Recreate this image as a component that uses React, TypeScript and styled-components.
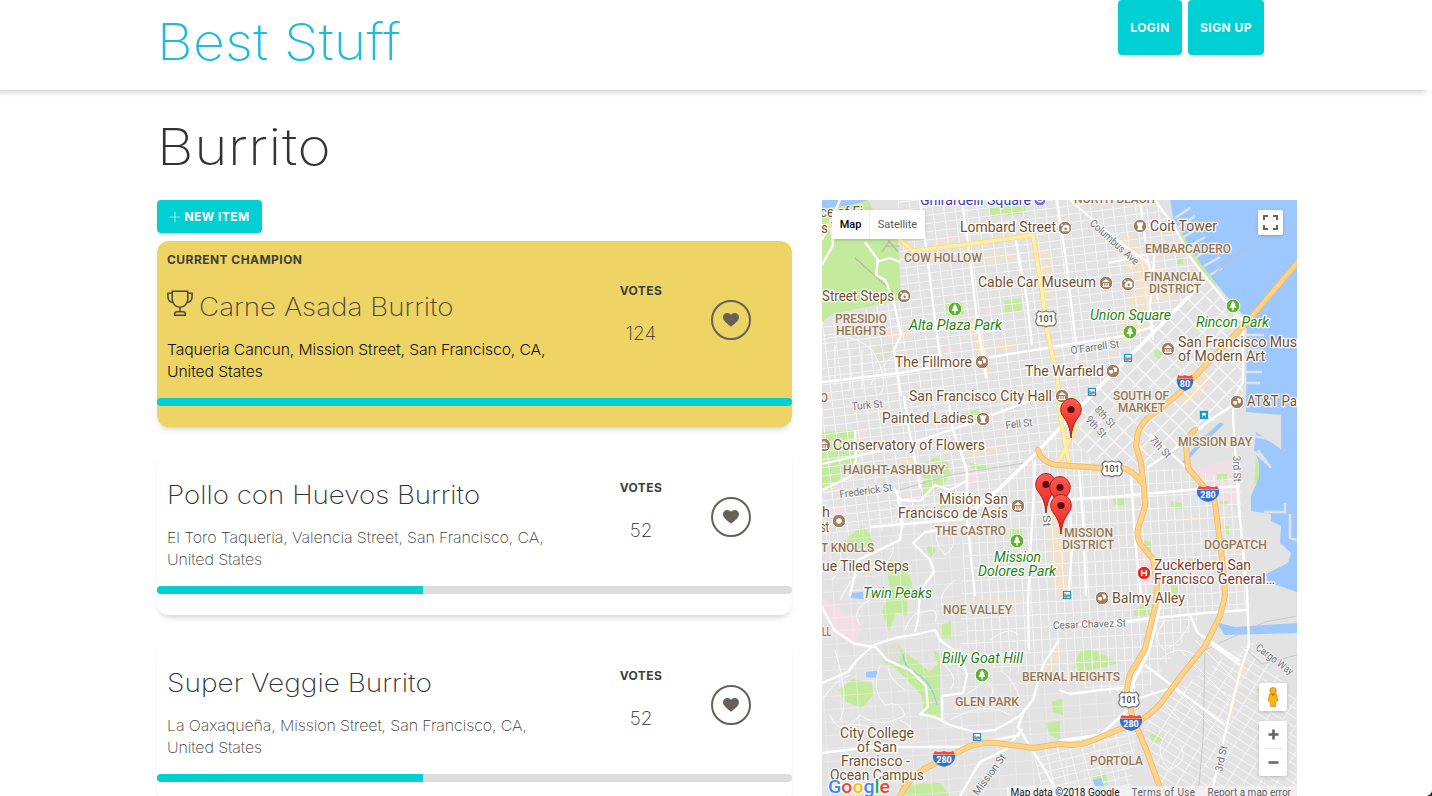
import React from "react";
import styled, { createGlobalStyle } from "styled-components";
import { TfiPlus } from "react-icons/tfi";

const Global = createGlobalStyle`
  * { box-sizing: border-box; }
  html, body { margin: 0; height: 796px; overflow: hidden; background: #fff; }
  body { font-family: Inter, "Open Sans", sans-serif; font-weight: 300; color: #333; }
  h1, h2, h3, p { margin: 0; }
`;

const cyan = "#00d0d3";

const Page = styled.div`
  position: relative;
  height: 796px;
  overflow: hidden;
`;

const Header = styled.header`
  height: 90px;
  margin-left: -10px;
  padding: 0 168px 0 167px;
  display: flex;
  justify-content: space-between;
  align-items: flex-start;
  background: #fff;
  box-shadow: 0 8px 6px -6px rgba(0, 0, 0, 0.2);
`;

const Wide = styled.span<{ $k: number }>`
  display: inline-block;
  transform: scaleX(${(p) => p.$k});
  transform-origin: 0 50%;
`;

const Logo = styled.h1`
  font-size: 50px;
  line-height: 84px;
  font-weight: 200;
  letter-spacing: 0.2px;
  color: #1cbbe0;
`;

const Nav = styled.nav`
  display: flex;
  gap: 6px;
`;

const Button = styled.button<{ $w: number; $h: number }>`
  width: ${(p) => p.$w}px;
  height: ${(p) => p.$h}px;
  display: flex;
  align-items: center;
  justify-content: center;
  gap: 3px;
  padding: 0;
  border: 0;
  border-radius: 4px;
  background: ${cyan};
  color: #fff;
  font: 700 12px Inter, sans-serif;
  letter-spacing: 0.45px;
  white-space: nowrap;
`;

const Main = styled.main`
  display: flex;
  flex-direction: column;
  padding: 0 135px 0 157px;
`;

const Heading = styled.h2`
  height: 110px;
  line-height: 115px;
  font-size: 50px;
  font-weight: 200;
  letter-spacing: 0.5px;
`;

const Columns = styled.div`
  display: flex;
  justify-content: space-between;
  align-items: flex-start;
`;

const List = styled.section`
  width: 635px;
  display: flex;
  flex-direction: column;
`;

const Card = styled.article<{ $gold?: boolean }>`
  height: ${(p) => (p.$gold ? 186 : 166)}px;
  margin-top: ${(p) => (p.$gold ? 8 : 22)}px;
  border-radius: 12px;
  background: ${(p) => (p.$gold ? "#eed365" : "#fff")};
  box-shadow: 0 5px 6px -3px rgba(0, 0, 0, 0.17), 0 3px 3px rgba(0, 0, 0, 0.02);
  display: flex;
  flex-direction: column;
`;

const CardBody = styled.div<{ $gold?: boolean }>`
  height: ${(p) => (p.$gold ? 157 : 137)}px;
  display: grid;
  grid-template-columns: 422px 104px 1fr;
  padding-left: 10px;
`;

const Info = styled.div<{ $gold?: boolean }>`
  padding-top: ${(p) => (p.$gold ? 11 : 25)}px;
  color: ${(p) => (p.$gold ? "#4c4738" : "#333")};
`;

const Small = styled.div`
  font-size: 12px;
  line-height: 16px;
  font-weight: 700;
  letter-spacing: 0.45px;
  color: #403f3b;
`;

const Title = styled.h3<{ $gold?: boolean }>`
  display: flex;
  align-items: center;
  gap: 6px;
  height: 40px;
  margin-top: ${(p) => (p.$gold ? 18 : 0)}px;
  font-size: 25.5px;
  font-weight: 200;
  white-space: nowrap;
  svg { margin-top: -7px; }
`;

const Address = styled.p<{ $gold?: boolean }>`
  width: 370px;
  padding-top: 13px;
  font-size: 15px;
  line-height: 22px;
  font-weight: ${(p) => (p.$gold ? 300 : 200)};
  letter-spacing: -0.1px;
  color: ${(p) => (p.$gold ? "#161408" : "#3a3a3a")};
  transform: scaleX(${(p) => (p.$gold ? 1.047 : 1.066)});
  transform-origin: 0 50%;
`;

const Votes = styled.div<{ $gold?: boolean }>`
  padding-top: ${(p) => (p.$gold ? 42 : 31)}px;
  text-align: center;
`;

const Count = styled.div`
  margin-top: 23px;
  font-size: 19px;
  line-height: 24px;
  font-weight: 200;
`;

const HeartCell = styled.div<{ $gold?: boolean }>`
  padding: ${(p) => (p.$gold ? 59 : 48)}px 0 0 18px;
`;

const HeartButton = styled.button`
  width: 40px;
  height: 40px;
  padding: 0;
  border: 2px solid #656059;
  border-radius: 50%;
  background: transparent;
  display: flex;
  align-items: center;
  justify-content: center;
`;

const Track = styled.div`
  height: 8px;
  border-radius: 4px;
  overflow: hidden;
  background: #ddd;
`;

const Fill = styled.div`
  height: 8px;
  background: ${cyan};
`;

const MapPanel = styled.aside`
  position: relative;
  width: 475px;
  height: 596px;
  overflow: hidden;
  background: #e5e3df;
  font-family: Roboto, sans-serif;
  font-weight: 400;
`;

const MapArt = styled.svg`
  display: block;
  font-family: Roboto, sans-serif;
`;

const MapControl = styled.div<{ $x: number; $y: number; $w: number; $h: number }>`
  position: absolute;
  left: ${(p) => p.$x}px;
  top: ${(p) => p.$y}px;
  width: ${(p) => p.$w}px;
  height: ${(p) => p.$h}px;
  display: flex;
  align-items: center;
  justify-content: center;
  background: #fff;
  border-radius: 2px;
  box-shadow: 0 1px 4px -1px rgba(0, 0, 0, 0.3);
`;

const TypeOption = styled.span<{ $active?: boolean }>`
  flex: ${(p) => (p.$active ? "0 0 38px" : "1")};
  line-height: 29px;
  text-align: center;
  font-size: 11px;
  font-weight: ${(p) => (p.$active ? 500 : 400)};
  color: ${(p) => (p.$active ? "#000" : "#565656")};
  border-right: ${(p) => (p.$active ? "1px solid #eee" : "0")};
`;

const Attribution = styled.div`
  position: absolute;
  right: 0;
  bottom: 0;
  height: 10px;
  padding: 0 6px 0 4px;
  display: flex;
  gap: 12px;
  background: rgba(245, 245, 245, 0.72);
  font-size: 10px;
  line-height: 14px;
  color: #666;
  white-space: nowrap;
  overflow: hidden;
  b { font-weight: 400; color: #222; }
  b + span { letter-spacing: 0.4px; }
`;

const WindowCorner = styled.svg`
  position: absolute;
  right: 0;
  bottom: 0;
`;

const items = [
  { name: "Carne Asada Burrito", place: "Taqueria Cancun, Mission Street, San Francisco, CA, United States", votes: 124, gold: true, stretch: 1.09 },
  { name: "Pollo con Huevos Burrito", place: "El Toro Taqueria, Valencia Street, San Francisco, CA, United States", votes: 52, stretch: 1.087 },
  { name: "Super Veggie Burrito", place: "La Oaxaqueña, Mission Street, San Francisco, CA, United States", votes: 52, stretch: 1.1 },
];

const Heart = () => (
  <svg width="16" height="14" viewBox="0 0 16 14">
    <path d="M8 13.8C3 10 0 7.300 0 4.300 0 1.800 1.900 0 4.300 0 5.800 0 7.200.700 8 1.900 8.800.700 10.200 0 11.700 0 14.100 0 16 1.800 16 4.300 16 7.300 13 10 8 13.800Z" fill="#656059" />
  </svg>
);

const Trophy = () => (
  <svg width="26" height="26" viewBox="0 0 26 26" fill="none" stroke="#4c4738" strokeWidth="1.500">
    <path d="M5.200 1.200H20.800V8.500C20.800 13.600 17.600 17.300 13 17.300S5.200 13.600 5.200 8.500Z" />
    <path d="M5.200 3.300H.9V6.300C.9 10 3 12.300 6.300 12.500M20.800 3.300H25.100V6.300C25.100 10 23 12.300 19.700 12.500" />
    <path d="M13 17.300V21.800M7.700 25.200V23.900Q7.700 21.800 10 21.800H16Q18.300 21.800 18.300 23.900V25.200Z" />
  </svg>
);

/* ---- Map data ---- */

const gridLines = (x0: number, y0: number, x1: number, y1: number, dx: number, dy: number) => {
  let d = "";
  for (let x = x0; x <= x1; x += dx) d += `M${x} ${y0}V${y1}`;
  for (let y = y0; y <= y1; y += dy) d += `M${x0} ${y}H${x1}`;
  return d;
};

const water =
  "M1170 198L1173 218 1195 255 1210 276 1228 298 1243 315 1247 331 1246 412 1281 415 1281 449 1256 432 1254 450 1259 463 1259 478 1251 496 1251 511 1271 514 1271 521 1281 526 1280 543 1291 553 1288 563 1266 574 1268 582 1297 592V198Z";

const greens = [
  "M822 206L850 204 868 200 880 222 898 240 901 300 832 314 822 322Z",
  "M989 200H1028L1024 214 990 217Z",
  "M945 303L962 301 964 314 946 316Z",
  "M1004 301L1021 298 1022 311 1005 313Z",
  "M822 432L855 430 859 446 854 464 832 488 822 490Z",
  "M922 464L935 458 948 462 950 474 944 485 921 496 923 482Z",
  "M970 463L989 466V470L970 468Z",
  "M961 414L978 409 983 421 966 424Z",
  "M844 541L855 532 862 525 870 535 874 548 857 549Z",
  "M886 560L903 561 912 583 907 596 907 616 896 612 889 632 882 611 890 592Z",
  "M897 642L904 652 917 661 929 672 938 664 933 650 940 654V700L941 718 925 715 921 695 908 681 897 669 883 662Z",
  "M838 690L853 679 872 683 873 695 862 708 846 702Z",
  "M942 624L951 621V639L942 638Z",
  "M1073 668L1082 648 1098 652 1119 663 1101 668 1080 671Z",
  "M1052 702L1063 698V715L1053 712ZM1045 723L1060 721V740L1050 735Z",
  "M901 785L940 783 950 796H900Z",
  "M1178 236L1187 230 1205 270 1217 286 1211 285 1198 266Z",
  "M1177 257L1183 258V264H1177Z",
  "M1143 540L1151 542 1152 552 1143 549ZM1171 501L1182 503V509L1171 508Z",
  "M1217 474H1227V481H1217ZM1220 501H1228V506H1220ZM1224 526H1229V534H1224Z",
  "M1150 735L1158 732 1163 741 1152 743ZM1188 559H1196V567H1188Z",
  "M1256 458L1261 469 1260 481 1254 485Z",
  "M1113 498H1126V505H1113ZM1010 528H1022V547H1010Z",
  "M1092 776L1106 773 1108 788 1096 791ZM1155 350L1163 350 1160 359 1154 356Z",
  "M928 545L936 549 932 557 927 551ZM938 500L955 490 960 502 941 509Z",
  "M1133 610L1148 600 1150 615 1135 616ZM1170 584L1178 586 1177 596 1171 592ZM1256 690L1262 686 1262 693Z",
];

const beiges = [
  "M933 242L958 234V238L935 246ZM963 258L1013 252V258L965 266Z",
  "M1121 231L1131 235 1150 266 1175 272 1190 283 1175 296 1150 304 1145 330 1125 345 1120 330 1135 285 1123 259Z",
  "M880 330L908 332V337L882 338ZM975 305L985 340 992 375H982L971 330Z",
  "M993 343L1012 340 1012 350 995 352Z",
  "M1042 250L1050 252 1054 292 1046 295Z",
  "M892 463L920 457V462L895 468ZM960 452L1005 445V450L962 457Z",
  "M1045 505L1058 500 1065 560 1067 595H1055Z",
  "M1190 370L1213 375 1202 395 1180 405Z",
  "M1060 637L1050 660 1045 672 1050 675 1060 655Z",
  "M1144 442L1149 444 1144 462 1137 456Z",
  "M1240 660L1245 668 1230 720 1224 735Z",
  "M1190 276L1215 256 1219 259 1196 281Z",
  "M1184 517H1200V521H1184ZM970 598L1020 598V602H970Z",
];

const pinks = [
  "M822 598L864 622 856 642 825 632Z",
  "M1198 466L1235 461 1237 506 1216 505 1205 487 1200 478Z",
  "M857 430L865 427 867 440 858 442ZM967 470L979 472V482L967 481Z",
  "M1136 540L1146 550 1152 570 1150 585 1140 590Z",
  "M985 307L993 306V315L986 316ZM828 506L846 505 848 515 832 520Z",
  "M947 345L952 347V359L945 352Z",
];

const streets = [
  "M1155 200L1175 228 1191 258 1205 276 1231 308 1243 322V381L1234 398 1233 416 1235 450 1239 510 1247 590",
  "M1247 590L1249 645 1240 672 1228 721 1220 757 1211 796",
  "M963 519L1000 488 1033 456 1059 429 1107 379 1155 331 1205 280",
  "M822 382L900 373 1057 346 1125 336 1155 326",
  "M1037 398L960 427 905 445 870 453 822 464",
  "M1070 200L1100 226 1130 250 1148 262",
  "M1109 263L1148 254 1190 250",
  "M920 200L928 262 935 320 942 370",
  "M962 200L970 258 977 320 986 378",
  "M1015 236L1027 300 1032 345",
  "M1057 200L1066 260 1078 360",
  "M1041 501L1110 497 1200 489 1240 486",
  "M1035 460L1033 505 1030 560 1028 600 1029 650",
  "M1079 470L1083 520 1086 596",
  "M1131 475L1135 540 1141 596",
  "M1069 480L1072 550 1068 600",
  "M948 398L953 430 967 470 967 520 975 596",
  "M904 396L909 430 918 475 920 488",
  "M894 488L900 500 920 501 935 485 950 490 966 481",
  "M870 527L917 523 963 519",
  "M970 525L925 532 913 543 930 560 934 572 920 591 918 620 915 632",
  "M822 683L848 672 857 660 874 645 895 638 918 634 935 630 940 640 960 655 967 675 963 693 942 696 942 720",
  "M874 645L887 660 910 670 926 686 928 707 920 714 935 717 950 725 975 732 995 730 1020 716 1033 700 1043 665 1059 640",
  "M822 607L834 630 855 644 875 647",
  "M822 753L870 747 920 747 960 747 1020 735",
  "M1059 622L1095 626 1144 619 1205 613 1247 610",
  "M1145 665L1174 687 1205 710 1225 725",
  "M1140 698L1174 687M1190 615L1198 633 1240 661M1211 644L1240 665",
  "M1059 795L1045 770 1018 727 1024 710",
  "M1022 729L1005 750 980 762 960 796",
  "M1147 468L1180 445 1210 420 1233 405",
  "M1150 434L1187 468 1205 488",
  "M1059 690L1070 694 1100 690 1135 687",
  "M822 490L850 477 856 460 855 430",
  "M830 220L833 245 822 265M865 242L878 260 876 275 885 280 893 298 901 335",
  "M901 335L894 350 901 396",
  "M822 240L840 200M876 262L890 258 900 262",
  "M1155 250L1150 305 1153 340M1140 200L1148 262 1158 300",
  "M850 596L858 560 900 540 902 525 897 490",
];

const highways = [
  "M1297 263L1248 321 1201 370 1176 396 1148 418Q1138 427 1137 438L1136 446 1141 463 1144 489 1145 506 1138 529Q1136 538 1142 546L1153 559 1157 583 1156 603 1145 649 1130 674Q1127 684 1127 696L1133 719 1146 749 1163 796",
  "M1038 450Q1042 464 1059 465L1101 468 1123 468Q1135 472 1143 484",
  "M1195 430Q1186 438 1186 445L1188 468 1205 488Q1214 496 1215 503L1220 543 1224 575 1225 596 1220 616 1205 646 1181 676 1161 703Q1150 716 1135 723L1091 741Q1082 745 1071 745L1059 744 1033 748 997 743Q985 742 970 746L930 766Q910 775 900 796",
];

const lombard = "M822 226L850 222 898 238 913 251 963 245 1033 235 1042 291 1047 331 1057 375 1061 420 1070 470M1077 425L1059 461";

const hills = [
  "M832 535Q850 560 832 580M840 600Q860 560 880 570 900 550 890 540M870 600Q850 610 860 625",
  "M835 650Q850 700 840 720M880 665Q870 690 885 705 900 700 905 715 880 730 860 715 840 740 830 715",
  "M900 720Q920 730 905 738M850 725Q870 722 885 738M822 700Q835 680 850 675M905 690Q890 680 888 668",
  "M945 665Q960 680 950 690M955 710Q965 695 985 705 1000 690 985 680 975 690 965 695M950 720Q985 700 1010 715",
  "M905 630Q912 610 925 612 940 606 935 622M940 520Q930 540 945 555 960 545 950 530M955 580Q930 600 950 615",
  "M990 640Q1010 625 1018 635M1000 670Q1015 680 1020 700M975 650Q990 660 1000 655M895 505Q905 515 895 522",
  "M822 340Q850 330 872 350 890 380 880 395M850 350V390M862 350V390M870 385Q885 360 895 355M835 345V385",
  "M1165 620Q1150 640 1165 650 1185 640 1190 620M1160 660Q1180 640 1200 660M1170 730Q1150 750 1170 770 1190 760 1180 745",
  "M1195 640L1235 680M1180 650L1230 700M1175 690L1220 735M1150 690L1180 720",
];

type Label = [text: string, x: number, y: number, width: number];

const pois: Label[] = [
  ["Lombard Street", 960, 232, 96], ["Cable Car Museum", 978, 287, 118], ["Coit Tower", 1150, 231, 67],
  ["Street Steps", 822, 301, 72], ["The Fillmore", 895, 367, 77], ["The Warfield", 1025, 376, 79],
  ["San Francisco City Hall", 909, 401, 143], ["San Francisco Mus", 1178, 347, 119], ["of Modern Art", 1178, 361, 87],
  ["Painted Ladies", 882, 423, 92], ["AT&T Pa", 1247, 406, 50], ["Conservatory of Flowers", 833, 450, 152],
  ["Misión San", 939, 504, 69], ["Francisco de Asís", 898, 518, 110], ["ue Tiled Steps", 822, 571, 87],
  ["h", 822, 517, 8], ["st", 820, 532, 9], ["Balmy Alley", 1112, 603, 73],
  ["City College", 840, 738, 74], ["of San", 857, 752, 40], ["Francisco -", 841, 766, 69], ["Ocean Campus", 830, 780, 94],
  ["ce of Fi", 820, 217, 43], ["s T", 821, 233, 18],
];

const districts: Label[] = [
  ["NORTH BEACH", 1074, 203, 81], ["COW HOLLOW", 904, 262, 78], ["EMBARCADERO", 1145, 253, 86],
  ["FINANCIAL", 1144, 281, 61], ["DISTRICT", 1149, 293, 52], ["PRESIDIO", 835, 323, 52], ["HEIGHTS", 836, 335, 50],
  ["SOUTH OF", 1113, 400, 56], ["MARKET", 1118, 412, 47], ["MISSION BAY", 1178, 446, 74],
  ["HAIGHT-ASHBURY", 843, 474, 102], ["THE CASTRO", 935, 535, 71], ["MISSION", 1064, 537, 49], ["DISTRICT", 1062, 549, 52],
  ["DOGPATCH", 1204, 549, 63], ["T KNOLLS", 821, 552, 53], ["NOE VALLEY", 943, 614, 69], ["GLEN PARK", 955, 706, 64],
  ["BERNAL HEIGHTS", 1022, 681, 98], ["PORTOLA", 1090, 765, 53], ["LL", 822, 636, 9], ["O", 820, 402, 8],
];

const parks: Label[] = [
  ["Alta Plaza Park", 909, 330, 93], ["Union Square", 1090, 320, 81], ["Rincon Park", 1196, 327, 73],
  ["Mission", 994, 562, 47], ["Dolores Park", 978, 576, 78], ["Twin Peaks", 863, 598, 69], ["Billy Goat Hill", 942, 663, 81],
];

const roads: [string, number, number, number, number][] = [
  ["Columbus Ave", 1089, 224, 62, 42], ["O'Farrell St", 1071, 354, 49, -8], ["Turk St", 852, 410, 31, -5],
  ["Fell St", 1006, 429, 27, -7], ["Frederick St", 840, 498, 53, -8], ["8th St", 1094, 410, 25, 47],
  ["9th St", 1085, 420, 25, 47], ["7th St", 1149, 440, 26, 47], ["3rd St", 1233, 456, 26, 88],
  ["Cesar Chavez St", 1053, 629, 73, -2], ["Cargo Way", 1255, 649, 44, 37], ["3rd St", 1222, 772, 26, -78],
  ["Mission St", 978, 796, 48, -54], ["St", 1043, 515, 12, 88],
];

const badges: [number, number][] = [
  [1065, 228], [1140, 226], [1106, 283], [1128, 284], [904, 296], [982, 362], [1113, 371], [1168, 349], [1062, 396],
  [983, 419], [1237, 402], [824, 445], [1018, 506], [839, 521], [1102, 598],
];

const trees: [number, number][] = [[955, 309], [1130, 332], [1233, 306], [1017, 541], [982, 675]];
const stations: [number, number][] = [[1128, 358], [1092, 392], [1204, 415], [1067, 595], [977, 737]];
const usShields: [number, number][] = [[1046, 319], [1112, 469], [1129, 700]];
const interstates: [number, number, string][] = [[1185, 383, "80"], [1208, 494, "280"], [1131, 723, "280"], [944, 759, "280"]];
const pins: [number, number][] = [[1071, 438], [1046, 513], [1060, 516], [1061, 534]];

const Labels = ({ data, ...rest }: { data: Label[] } & React.SVGProps<SVGGElement>) => (
  <g paintOrder="stroke" strokeLinejoin="round" {...rest}>
    {data.map(([t, x, y, w], i) => (
      <text key={i} x={x} y={y} textLength={w} lengthAdjust="spacingAndGlyphs">{t}</text>
    ))}
  </g>
);

const CityMap = () => (
  <MapArt width="475" height="596" viewBox="822 200 475 596">
    <defs>
      <clipPath id="north"><path d="M898 200H1155L1205 278 1057 428 963 519 822 540V322L901 300Z" /></clipPath>
      <clipPath id="soma"><path d="M1205 278L1243 322V400L1147 470 1100 464 1060 430Z" /></clipPath>
      <clipPath id="south"><path d="M963 519L1059 429 1100 466 1147 468 1190 470 1240 480 1250 610H1205L1140 700 960 660Z" /></clipPath>
      <clipPath id="west"><path d="M822 500L960 520 963 660 1140 700 1130 796H822Z" /></clipPath>
      <clipPath id="east"><path d="M1140 715L1250 640 1297 700V796H1160Z" /></clipPath>
      <linearGradient id="pin" x1="0" y1="0" x2="0" y2="1">
        <stop offset="0" stopColor="#ff5a52" /><stop offset="1" stopColor="#e3211b" />
      </linearGradient>
    </defs>
    <path d="M822 200H1297V796H822Z" fill="#e3e3e3" />
    {pinks.map((d, i) => <path key={i} d={d} fill="#f1dfe5" />)}
    {beiges.map((d, i) => <path key={i} d={d} fill="#f3e2cb" />)}
    {greens.map((d, i) => <path key={i} d={d} fill="#c3ea9d" />)}
    <path d="M883 645L898 643 902 655 898 665 882 660ZM875 347L895 343 890 357 878 362Z" fill="#dedfd5" />
    <g stroke="#f5f5f5" strokeWidth="0.9" fill="none">
      <g clipPath="url(#north)"><path transform="rotate(-7 1000 350)" d={gridLines(760, 150, 1250, 580, 11.200, 8.200)} /></g>
      <g clipPath="url(#soma)"><path transform="rotate(44 1150 390)" strokeWidth="1.600" d={gridLines(1040, 270, 1260, 500, 12, 14)} /></g>
      <g clipPath="url(#south)"><path transform="rotate(-3 1080 540)" d={gridLines(930, 400, 1270, 720, 8.200, 12.500)} /></g>
      <g clipPath="url(#west)" opacity="0.5"><path transform="rotate(-4 950 700)" d={gridLines(790, 480, 1170, 830, 17, 13)} /></g>
      <g clipPath="url(#east)"><path transform="rotate(32 1220 730)" d={gridLines(1100, 600, 1340, 860, 14, 8)} /></g>
      <g clipPath="url(#west)"><path transform="rotate(-14 1100 770)" d={gridLines(1040, 735, 1150, 830, 12, 8)} /></g>
    </g>
    <path d={water} fill="#9dc8ff" />
    <path d="M822 200H868L850 206 835 206 822 212ZM1216 622L1235 627 1297 623V633L1225 635ZM1093 780L1101 778 1107 792 1098 796ZM850 593L863 592V599L851 598ZM866 672L877 671V678L866 677Z" fill="#9dc8ff" />
    <path d="M1220 422L1200 441 1182 462 1184 464 1204 443 1224 424Z" fill="#9dc8ff" />
    <path d="M1175 218L1190 208M1177 228L1195 216M1182 238L1202 226M1188 247L1205 237M1195 258L1213 245M1204 266L1220 257M1210 275L1222 268M1245 335H1264M1246 350H1262M1246 360L1264 358M1246 372H1262M1246 383H1260M1250 435L1281 442M1250 425H1280M1255 452L1270 466M1258 450L1271 468M1264 512H1285V503M1290 514V538L1297 540" stroke="#dfe3e8" strokeWidth="2.500" fill="none" />
    <path d="M1212 278Q1240 242 1297 226" stroke="#b9c0c8" strokeWidth="1.200" fill="none" />
    <path d="M855 258L893 292M870 272L860 262M890 240L882 252M888 240L898 252M885 246H900" stroke="#b9b9a0" strokeWidth="1.200" fill="none" />
    <path d="M900 490L950 475 1030 462M1205 653L1203 740 1198 796M1297 655L1262 664 1245 648M1297 616L1265 622 1205 650" stroke="#c8c8c8" strokeWidth="1" fill="none" />
    <path d="M903 654Q904 668 917 674 932 682 937 705" stroke="#9cc5f5" strokeWidth="1.200" fill="none" />
    <g stroke="#fafafa" strokeWidth="1" fill="none">{hills.map((d, i) => <path key={i} d={d} />)}</g>
    <g stroke="#fff" strokeWidth="2.300" fill="none" strokeLinejoin="round">{streets.map((d, i) => <path key={i} d={d} />)}</g>
    <path d={streets[2]} stroke="#fff" strokeWidth="3.500" fill="none" />
    <path d="M1161 600Q1157 620 1149 650 1142 665 1132 685L1128 710 1100 735 1059 741M1133 725L1152 760 1160 796" stroke="#fff" strokeWidth="3" fill="none" />
    <g fill="none" strokeLinejoin="round">
      <path d={lombard} stroke="#f4dc83" strokeWidth="5" />
      <path d={lombard} stroke="#ffeeaa" strokeWidth="3.500" />
      {highways.map((d, i) => <path key={i} d={d} stroke="#f0bc68" strokeWidth="6" strokeLinecap="round" />)}
      {highways.map((d, i) => <path key={i} d={d} stroke="#ffd28a" strokeWidth="4.200" strokeLinecap="round" />)}
    </g>
    <g fontSize="10.500" fill="#777" stroke="#f5f5f5" strokeWidth="2" paintOrder="stroke">
      {roads.map(([t, x, y, w, r], i) => (
        <text key={i} x={x} y={y} textLength={w} lengthAdjust="spacingAndGlyphs" transform={`rotate(${r} ${x} ${y})`}>{t}</text>
      ))}
    </g>
    <Labels data={districts} fontSize="12" fontWeight="500" fill="#967755" stroke="#f3f1ee" strokeWidth="2.500" />
    <Labels data={pois} fontSize="14" fill="#75502f" stroke="#fff" strokeWidth="2.500" />
    <Labels data={[["Zuckerberg San", 1154, 570, 97], ["Francisco General…", 1154, 584, 121]]} fontSize="14" fill="#84392f" stroke="#fff" strokeWidth="2.500" />
    <Labels data={[["Ghirardelli Square", 920, 205, 111]]} fontSize="14" fill="#4139bd" stroke="#fff" strokeWidth="2.500" />
    <Labels data={parks} fontSize="14" fontStyle="italic" fill="#278312" stroke="#fff" strokeWidth="2.500" />
    <circle cx="1040" cy="200" r="6" fill="#766be0" stroke="#fff" />
    <path d="M1037 200Q1040 204 1043 200" stroke="#fff" strokeWidth="1.300" fill="none" />
    {badges.map(([x, y], i) => (
      <g key={i} transform={`translate(${x} ${y})`}>
        <circle r="6.700" fill="#a47c5f" stroke="#fff" strokeWidth="1" />
        {i === 13 ? <circle r="2.800" fill="#fff" />
          : [2, 7, 8, 11, 12].includes(i) ? <path d="M-4 -1L0 -4 4 -1ZM-3 0H-1.700V3H-3ZM-.6 0H.6V3H-.6ZM1.700 0H3V3H1.700ZM-4 3H4V4H-4Z" fill="#fff" />
          : [1, 9].includes(i) ? <path d="M-3 -4H-1.500V-3H-.7V-4H.7V-3H1.500V-4H3V-1L2 0V2L3 4H-3L-2 2V0L-3 -1Z" fill="#fff" />
          : [5, 6, 10, 14].includes(i) ? <path d="M-4 -1H0V2Q-2 4 -4 1ZM.5 -4L4 -3V0Q3 2 1 1V-2H0Z" fill="#fff" />
          : <><path d="M-2 -2H-1L0 -3H2L3 -2H4V3H-3V0H-2ZM-4 -3H-2M-3 -4V-2" fill="#fff" stroke="#fff" strokeWidth=".7" /><circle cx=".7" cy=".7" r="1.300" fill="#a47c5f" /></>}
      </g>
    ))}
    {trees.map(([x, y], i) => (
      <g key={i} transform={`translate(${x} ${y})`}>
        <circle r="6.900" fill="#5db52f" stroke="#fff" strokeWidth="1" />
        <path d="M0 -5L2.500 -1.500H1.700L3.500 2H.7V4.500H-.7V2H-3.500L-1.700 -1.500H-2.500Z" fill="#fff" />
      </g>
    ))}
    {stations.map(([x, y], i) => (
      <g key={i} transform={`translate(${x} ${y})`}>
        <rect x="-3.500" y="-3.500" width="7" height="7" fill="#fff" stroke="#1598d0" strokeWidth="1.200" />
        {i === 2 ? <path d="M-4 -4H4V4H-4ZM-2 -2V.5H2V-2ZM-2 1.500V2.500H-1V1.500ZM1 1.500V2.500H2V1.500Z" fill="#1598d0" fillRule="evenodd" /> : <path d="M-2 -1.500V2H0V0H2V2" fill="none" stroke="#666" strokeWidth="1.200" />}
      </g>
    ))}
    <g transform="translate(1144 573)">
      <circle r="6.700" fill="#e8291d" stroke="#fff" /><path d="M-2.300 -3V3M2.300 -3V3M-2 0H2" stroke="#fff" strokeWidth="1.500" />
    </g>
    {usShields.map(([x, y], i) => (
      <g key={i} transform={`translate(${x} ${y})`}>
        <path d="M-7 -8Q-4 -6 0 -8 4 -6 7 -8L10 -5Q8 -2 10 1 11 5 7 7 3 6 0 8 -3 6 -7 7 -11 5 -10 1 -8 -2 -10 -5Z" fill="#fff" stroke="#777" strokeWidth="1.200" />
        <text y="3.300" textAnchor="middle" fontSize="9" fontWeight="500" fill="#444">101</text>
      </g>
    ))}
    {interstates.map(([x, y, t], i) => (
      <g key={i} transform={`translate(${x} ${y}) scale(${t === "80" ? 0.75 : 1} 1)`}>
        <path d="M-11 -4H11Q12 5 0 8 -12 5 -11 -4Z" fill="#3471cd" />
        <path d="M-9 -8Q-5 -6 0 -8 5 -6 9 -8L11 -4.600H-11Z" fill="#e3504c" />
        <text y="4" textAnchor="middle" fontSize="9" fontWeight="700" fill="#fff" transform={t === "80" ? "scale(1.333 1)" : undefined}>{t}</text>
      </g>
    ))}
    {pins.map(([x, y], i) => (
      <g key={i} transform={`translate(${x} ${y})`}>
        <path d="M0 0C-1 -10 -3 -15 -7.500 -21 -14 -29 -8 -39.500 0 -39.500 8 -39.500 14 -29 7.500 -21 3 -15 1 -10 0 0Z" fill="url(#pin)" stroke="#a3231b" strokeWidth="1" />
        <circle cy="-28.500" r="3.600" fill="#5a0b0b" />
      </g>
    ))}
    <g fontSize="19" fontWeight="500" stroke="#fff" strokeWidth="2" paintOrder="stroke" fontFamily="Roboto, sans-serif">
      <text x="828" y="793" textLength="62" lengthAdjust="spacingAndGlyphs">
        <tspan fill="#4285f4">G</tspan><tspan fill="#ea4335">o</tspan><tspan fill="#fbbc05">o</tspan><tspan fill="#4285f4">g</tspan><tspan fill="#34a853">l</tspan><tspan fill="#ea4335">e</tspan>
      </text>
    </g>
  </MapArt>
);

export default function App() {
  return (
    <Page>
      <Global />
      <Header>
        <Logo><Wide $k={1.107}>Best Stuff</Wide></Logo>
        <Nav>
          <Button $w={64} $h={55}>LOGIN</Button>
          <Button $w={76} $h={55}>SIGN UP</Button>
        </Nav>
      </Header>
      <Main>
        <Heading><Wide $k={1.135}>Burrito</Wide></Heading>
        <Columns>
          <List>
            <Button $w={105} $h={33}><TfiPlus size={12} />NEW ITEM</Button>
            {items.map((it) => (
              <Card key={it.name} $gold={it.gold}>
                <CardBody $gold={it.gold}>
                  <Info $gold={it.gold}>
                    {it.gold && <Small>CURRENT CHAMPION</Small>}
                    <Title $gold={it.gold}>{it.gold && <Trophy />}<Wide $k={it.stretch}>{it.name}</Wide></Title>
                    <Address $gold={it.gold}>{it.place}</Address>
                  </Info>
                  <Votes $gold={it.gold}>
                    <Small>VOTES</Small>
                    <Count>{it.votes}</Count>
                  </Votes>
                  <HeartCell $gold={it.gold}><HeartButton><Heart /></HeartButton></HeartCell>
                </CardBody>
                <Track><Fill style={{ width: `${Math.round((it.votes / 124) * 635)}px` }} /></Track>
              </Card>
            ))}
          </List>
          <MapPanel>
            <CityMap />
            <MapControl $x={10} $y={10} $w={93} $h={29}>
              <TypeOption $active>Map</TypeOption>
              <TypeOption>Satellite</TypeOption>
            </MapControl>
            <MapControl $x={436} $y={10} $w={25} $h={25}>
              <svg width="15" height="15" viewBox="0 0 15 15"><path d="M1 5V1H5M10 1H14V5M14 10V14H10M5 14H1V10" fill="none" stroke="#666" strokeWidth="2" /></svg>
            </MapControl>
            <MapControl $x={437} $y={483} $w={28} $h={28}>
              <svg width="12" height="20" viewBox="0 0 12 20">
                <path d="M2.500 7H9.500L11 14H9L8.500 19.500H3.500L3 14H1Z" fill="#fbb510" stroke="#d58b12" strokeWidth=".7" />
                <circle cx="6" cy="3.800" r="3.300" fill="#fbb510" stroke="#b97b16" strokeWidth=".7" />
                <path d="M4 7H8L6 9Z" fill="#e9542e" />
              </svg>
            </MapControl>
            <MapControl $x={437} $y={521} $w={28} $h={55}>
              <svg width="28" height="55" viewBox="0 0 28 55"><path d="M9.500 13.500H19.500M14.500 8.500V18.500M9.500 41.500H19.500" stroke="#666" strokeWidth="2.600" /><path d="M5 27.500H23" stroke="#e6e6e6" /></svg>
            </MapControl>
            <Attribution><b>Map data ©2018 Google</b><span>Terms of Use</span><span>Report a map error</span></Attribution>
          </MapPanel>
        </Columns>
      </Main>
      <WindowCorner width="5" height="5" viewBox="0 0 5 5"><path d="M5 0V5H0Q4 4 5 0Z" fill="#222" /></WindowCorner>
    </Page>
  );
}
